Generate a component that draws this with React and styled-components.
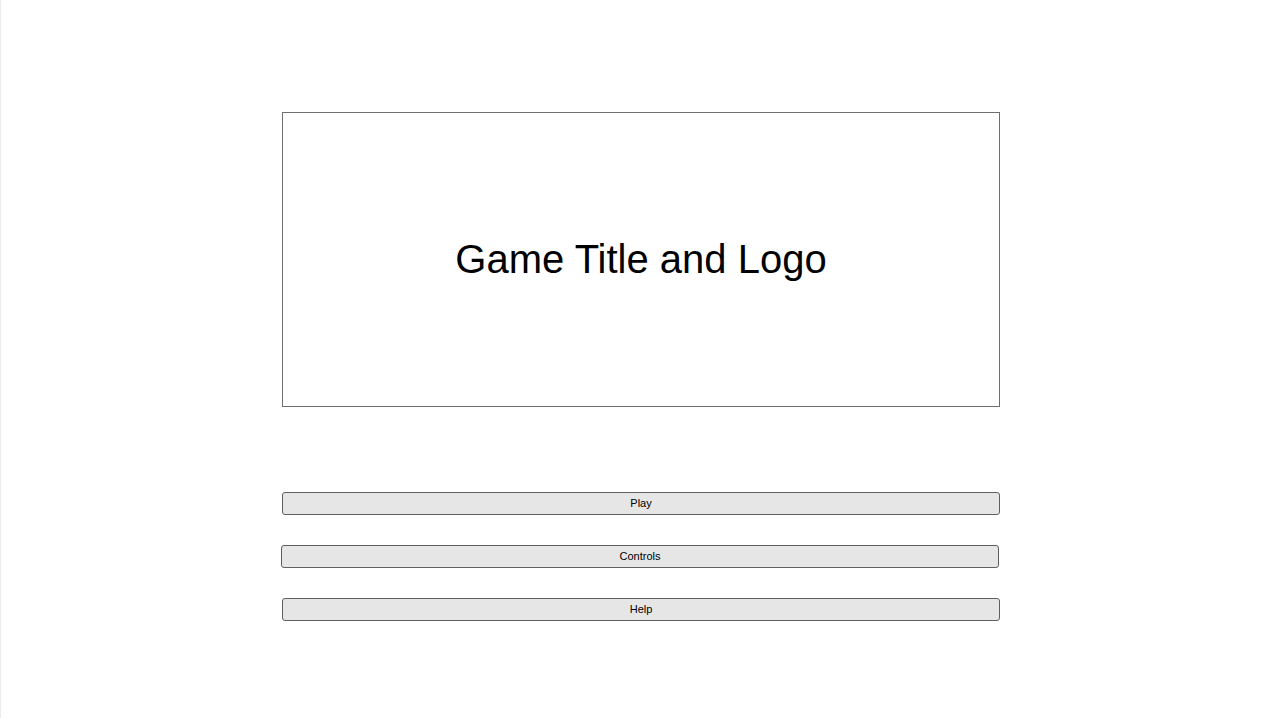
import React from "react";
import styled, { createGlobalStyle } from "styled-components";

const Global = createGlobalStyle`
  html, body { margin: 0; padding: 0; background: #fff; }
  body { font-family: "Liberation Sans", Arial, sans-serif; }
`;

const Page = styled.div`
  box-sizing: border-box;
  min-height: 718px;
  border-left: 1px solid #ececec;
  padding: 112px 0 0 281px;
  display: flex;
  flex-direction: column;
`;

const TitleBox = styled.div`
  box-sizing: border-box;
  width: 718px;
  height: 295px;
  border: 1px solid #6e6e6e;
  display: flex;
  align-items: center;
  justify-content: center;
  font-size: 40px;
  color: #000;
  padding-bottom: 1px;
`;

const Menu = styled.div`
  margin-top: 85px;
  display: flex;
  flex-direction: column;
  gap: 30px;
`;

const MenuButton = styled.button`
  box-sizing: border-box;
  width: 718px;
  height: 23px;
  margin-left: ${(p) => p.$shift || 0}px;
  border: 1px solid #5f5f5f;
  border-radius: 3px;
  background: #e6e6e6;
  font-family: "Liberation Sans", Arial, sans-serif;
  font-size: 11px;
  color: #000;
  padding: 0 0 2px 0;
  display: flex;
  align-items: center;
  justify-content: center;
`;

export default function App() {
  return (
    <>
      <Global />
      <Page>
        <TitleBox>Game Title and Logo</TitleBox>
        <Menu>
          <MenuButton>Play</MenuButton>
          <MenuButton $shift={-1}>Controls</MenuButton>
          <MenuButton>Help</MenuButton>
        </Menu>
      </Page>
    </>
  );
}
